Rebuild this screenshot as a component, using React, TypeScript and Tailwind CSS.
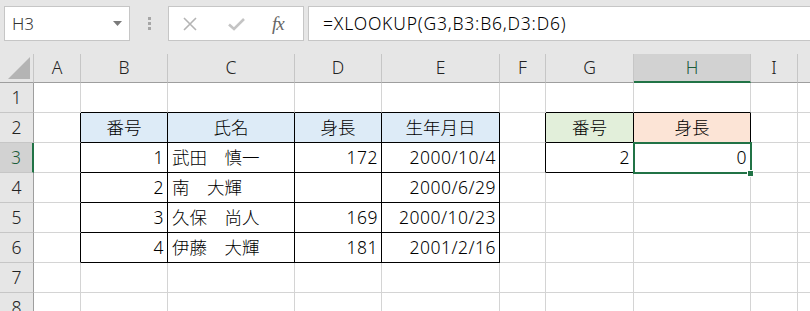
import React from 'react';
import clsx from 'clsx';

type Cell = { text?: string; align?: 'left' | 'right' | 'center'; fill?: 'blue' | 'green' | 'peach' };

const columns = ['A', 'B', 'C', 'D', 'E', 'F', 'G', 'H', 'I', 'J'];

// rows 1..8, columns A..J
const sheet: Record<number, Record<string, Cell>> = {
  1: {},
  2: {
    B: { text: '番号', align: 'center', fill: 'blue' },
    C: { text: '氏名', align: 'center', fill: 'blue' },
    D: { text: '身長', align: 'center', fill: 'blue' },
    E: { text: '生年月日', align: 'center', fill: 'blue' },
    G: { text: '番号', align: 'center', fill: 'green' },
    H: { text: '身長', align: 'center', fill: 'peach' },
  },
  3: {
    B: { text: '1', align: 'right' },
    C: { text: '武田　慎一', align: 'left' },
    D: { text: '172', align: 'right' },
    E: { text: '2000/10/4', align: 'right' },
    G: { text: '2', align: 'right' },
    H: { text: '0', align: 'right' },
  },
  4: {
    B: { text: '2', align: 'right' },
    C: { text: '南　大輝', align: 'left' },
    E: { text: '2000/6/29', align: 'right' },
  },
  5: {
    B: { text: '3', align: 'right' },
    C: { text: '久保　尚人', align: 'left' },
    D: { text: '169', align: 'right' },
    E: { text: '2000/10/23', align: 'right' },
  },
  6: {
    B: { text: '4', align: 'right' },
    C: { text: '伊藤　大輝', align: 'left' },
    D: { text: '181', align: 'right' },
    E: { text: '2001/2/16', align: 'right' },
  },
  7: {},
  8: {},
};

const rightBlack = (r: number, c: string) =>
  (r >= 2 && r <= 6 && 'ABCDE'.includes(c)) || (r >= 2 && r <= 3 && 'FGH'.includes(c));
const bottomBlack = (r: number, c: string) =>
  (r >= 1 && r <= 6 && 'BCDE'.includes(c)) || (r >= 1 && r <= 3 && 'GH'.includes(c));

const GridCell = ({ r, c }: { r: number; c: string }) => {
  const cell = sheet[r][c] ?? {};
  const selected = r === 3 && c === 'H';
  return (
    <div
      className={clsx(
        'relative flex items-center border-r border-b px-[4px] text-black whitespace-nowrap',
        rightBlack(r, c) ? 'border-r-black' : 'border-r-[#d4d4d4]',
        bottomBlack(r, c) ? 'border-b-black' : 'border-b-[#d4d4d4]',
        cell.align === 'right' && 'justify-end tracking-[0.5px] pr-[3px]',
        cell.align === 'center' && 'justify-center',
        cell.fill === 'blue' && 'bg-[#ddebf7]',
        cell.fill === 'green' && 'bg-[#e2efda]',
        cell.fill === 'peach' && 'bg-[#fce4d6]',
        !cell.fill && 'bg-white'
      )}
    >
      {cell.text}
      {selected && (
        <>
          <div className="absolute z-10 -left-px -top-px -right-[2px] -bottom-[2px] border-2 border-[#217346]" />
          <div className="absolute z-20 -right-[4px] -bottom-[5px] w-[7px] h-[7px] bg-[#217346] border border-white" />
        </>
      )}
    </div>
  );
};

const Toolbar = () => (
  <div className="h-[54px] bg-[#e6e6e6] pt-[6px] flex items-start">
    <div className="ml-[4px] w-[126px] h-[35px] bg-white border border-[#c6c6c6] flex items-center pl-[7px] pr-[7px] justify-between">
      <span className="text-[17px] text-[#333]">H3</span>
      <svg width="9" height="5" viewBox="0 0 9 5">
        <polygon points="0,0 9,0 4.5,5" fill="#7a7a7a" />
      </svg>
    </div>
    <div className="w-[38px] h-[35px] flex flex-col items-center justify-center gap-[2px]">
      <div className="w-[3px] h-[3px] bg-[#a6a6a6]" />
      <div className="w-[3px] h-[3px] bg-[#a6a6a6]" />
      <div className="w-[3px] h-[3px] bg-[#a6a6a6]" />
    </div>
    <div className="w-[136px] h-[35px] bg-white border border-[#c6c6c6] flex items-center">
      <svg className="ml-[14px]" width="14" height="14" viewBox="0 0 14 14">
        <path d="M1 1 L13 13 M13 1 L1 13" stroke="#b4b4b4" strokeWidth="1.6" />
      </svg>
      <svg className="ml-[31px]" width="17" height="14" viewBox="0 0 17 14">
        <path d="M1 7.5 L6 12 L16 2" stroke="#c4c4c4" strokeWidth="2.6" fill="none" />
      </svg>
      <span className="ml-[27px] font-['Liberation_Serif',serif] italic text-[19px] text-[#666] tracking-[-1px]">
        fx
      </span>
    </div>
    <div className="ml-[4px] flex-1 h-[35px] bg-white border-y border-l border-[#c6c6c6] flex items-center pl-[14px] text-[17.5px] tracking-[0.8px] text-black">
      =XLOOKUP(G3,B3:B6,D3:D6)
    </div>
  </div>
);

const App = () => {
  return (
    <div className="w-[810px] h-[311px] overflow-hidden bg-white font-['Noto_Sans','Noto_Sans_CJK_JP',sans-serif] font-light text-[17.5px] leading-none">
      <Toolbar />
      <div className="grid grid-cols-[34px_47px_87px_127px_87px_118px_46px_88px_117px_47px_60px] grid-rows-[29px_repeat(8,30px)]">
        <div className="bg-[#e6e6e6] border-r border-b border-r-[#c6c6c6] border-b-[#9e9e9e] flex items-end justify-end pr-[3px] pb-[3px]">
          <svg width="22" height="22" viewBox="0 0 22 22">
            <polygon points="22,0 22,22 0,22" fill="#b4b4b4" />
          </svg>
        </div>
        {columns.map((c) => (
          <div
            key={c}
            className={clsx(
              'flex items-center justify-center border-r border-r-[#c6c6c6]',
              c === 'H'
                ? 'bg-[#d2d2d2] border-b-2 border-b-[#217346] text-[#1c5c3a]'
                : 'bg-[#e6e6e6] border-b border-b-[#9e9e9e] text-[#222]'
            )}
          >
            {c === 'J' ? '' : c}
          </div>
        ))}
        {[1, 2, 3, 4, 5, 6, 7, 8].map((r) => (
          <React.Fragment key={r}>
            <div
              className={clsx(
                'flex items-center justify-center border-b border-b-[#c6c6c6]',
                r === 3
                  ? 'bg-[#d2d2d2] border-r-2 border-r-[#217346] text-[#1c5c3a]'
                  : 'bg-[#e6e6e6] border-r border-r-[#9e9e9e] text-[#222]'
              )}
            >
              {r}
            </div>
            {columns.map((c) => (
              <GridCell key={c} r={r} c={c} />
            ))}
          </React.Fragment>
        ))}
      </div>
    </div>
  );
};

export default App;
